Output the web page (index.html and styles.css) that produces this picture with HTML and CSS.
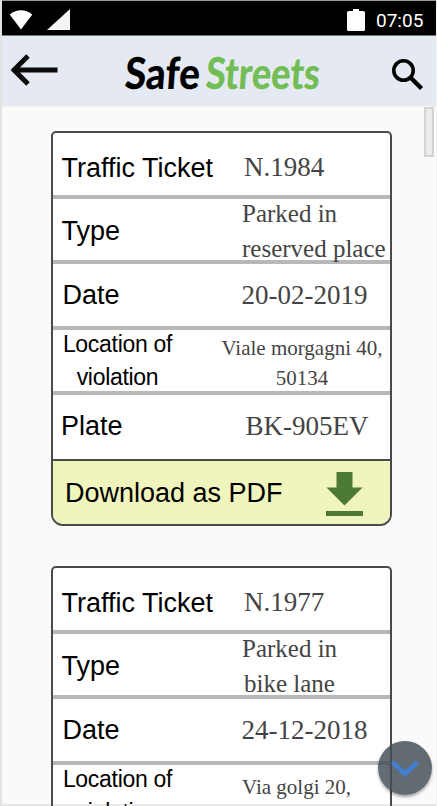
FILE: index.html
```html
<!DOCTYPE html>
<html lang="en">
<head>
<meta charset="utf-8">
<title>SafeStreets</title>
<link rel="stylesheet" href="styles.css">
</head>
<body>
<div class="phone">
  <div class="status">
    <svg class="wifi" width="24" height="20" viewBox="0 0 24 20"><path d="M0.7 4.5Q12 -3.8 23.3 4.5L12 19.6Z" fill="#fff"/></svg>
    <svg class="signal" width="23" height="21" viewBox="0 0 23 21"><path d="M0 21L23 0V21Z" fill="#f5f5f5"/></svg>
    <svg class="battery" width="18" height="22" viewBox="0 0 18 22"><path d="M6 0H12V2H16.5Q18 2 18 3.5V20.5Q18 22 16.500 22H1.5Q0 22 0 20.500V3.500Q0 2 1.500 2H6Z" fill="#fff"/></svg>
    <span class="clock">07:05</span>
  </div>
  <header class="header">
    <svg class="back" width="47" height="32" viewBox="0 0 47 32"><path d="M17 2L3 16L17 30M3 16H46.500" fill="none" stroke="#0b0b0b" stroke-width="5"/></svg>
    <svg class="logo" width="200" height="54" viewBox="0 0 200 54">
      <g transform="translate(3 41) skewX(-4)">
        <text class="safe" x="0" y="0" textLength="75" lengthAdjust="spacingAndGlyphs">Safe</text>
        <text class="streets" x="81" y="0" textLength="114" lengthAdjust="spacingAndGlyphs">Streets</text>
      </g>
    </svg>
    <svg class="search" width="32" height="32" viewBox="0 0 32 32"><circle cx="11.500" cy="11.500" r="9.700" fill="none" stroke="#000" stroke-width="3.600"/><path d="M18.500 18.500L29.500 29.500" stroke="#000" stroke-width="4.400"/></svg>
  </header>
  <main class="content">
    <section class="card">
      <div class="row ticket"><span class="label">Traffic Ticket</span><span class="value">N.1984</span></div>
      <div class="row type"><span class="label">Type</span><span class="value">Parked in<br>reserved place</span></div>
      <div class="row date"><span class="label">Date</span><span class="value">20-02-2019</span></div>
      <div class="row place"><span class="label">Location of<br>violation</span><span class="value">Viale morgagni 40,<br>50134</span></div>
      <div class="row plate"><span class="label">Plate</span><span class="value">BK-905EV</span></div>
      <div class="download"><span>Download as PDF</span>
        <svg width="37" height="44" viewBox="0 0 37 44"><path d="M10.500 0H26.500V15.500H36.500L18.500 33.500L0.500 15.500H10.500ZM0 39H37V44H0Z" fill="#4c7a34"/></svg>
      </div>
    </section>
    <section class="card second">
      <div class="row ticket"><span class="label">Traffic Ticket</span><span class="value">N.1977</span></div>
      <div class="row type"><span class="label">Type</span><span class="value">Parked in<br>bike lane</span></div>
      <div class="row date"><span class="label">Date</span><span class="value">24-12-2018</span></div>
      <div class="row place"><span class="label">Location of<br>violation</span><span class="value">Via golgi 20,</span></div>
    </section>
  </main>
  <div class="scrollbar"></div>
  <div class="fab"><svg width="28" height="17" viewBox="0 0 28 17"><path d="M1.500 2L14 14L26.500 2" fill="none" stroke="#407fd5" stroke-width="4.500"/></svg></div>
</div>
</body>
</html>
```
FILE: styles.css
```css
* { box-sizing: border-box; }
body { margin: 0; background: #fafafa; font-family: "Liberation Sans", sans-serif; overflow: hidden; }
svg { display: block; flex: none; }
.phone {
  position: relative;
  width: 437px;
  height: 806px;
  overflow: hidden;
  background: #fafafa;
  border-left: 2px solid #e2e2e2;
  border-right: 1px solid #f3f3f3;
}
.phone::after {
  content: "";
  position: absolute;
  left: 0;
  right: 0;
  bottom: 0;
  height: 2px;
  background: rgba(120, 120, 120, 0.15);
}
.status {
  display: flex;
  height: 36px;
  border-top: 1px solid #999;
  border-bottom: 1px solid #777;
  background: #000;
}
.wifi { margin: 9px 0 0 7px; }
.signal { margin: 8px 0 0 14px; }
.battery { margin: 8px 0 0 277px; }
.clock { margin: 7px 0 0 11px; color: #fff; font: 19px/26px Roboto, sans-serif; }
.header {
  display: flex;
  height: 71px;
  background: #e5eaf2;
  border-bottom: 1px solid #f2f3ec;
}
.back { margin: 18px 0 0 9px; }
.logo { margin: 12px 0 0 63px; overflow: visible; }
.logo text { font: 900 44px Lato, sans-serif; }
.safe { fill: #000; }
.streets { fill: #72bd55; }
.search { margin: 23px 0 0 71px; }
.content { padding: 24px 0 0 49px; }
.card {
  width: 341px;
  height: 395px;
  border: 2px solid #4a4a4a;
  border-radius: 5px 5px 12px 12px;
  background: #fff;
  overflow: hidden;
}
.second { margin-top: 40px; }
.row {
  display: grid;
  grid-template-columns: 166px 171px;
  height: 66px;
  border-bottom: 4px solid #b8b8b8;
}
.label, .value { height: 62px; white-space: nowrap; }
.label { padding-left: 8.500px; font-size: 27px; line-height: 62px; color: #000; }
.value { font: 27px/62px "Liberation Serif", serif; color: #444; padding-left: 25px; }
.ticket .label { padding-top: 4px; }
.ticket .value { padding-top: 3px; }
.type, .place { height: 65px; }
.type .label { padding-top: 1px; }
.type .value { font-size: 25px; line-height: 35px; margin-top: -3px; padding-left: 23px; }
.second .type .value { padding: 0; margin-left: 23px; width: 95px; text-align: center; }
.date .label { padding-left: 9.500px; }
.date .value { padding-left: 22.500px; }
.place .label { width: 129px; padding-left: 0; text-align: center; font-size: 23px; letter-spacing: -0.300px; line-height: 33px; margin-top: -2px; }
.place .value { font-size: 21px; line-height: 30px; padding: 3px 0 0; margin-left: 1px; width: 164px; text-align: center; }
.second .place .value { padding: 7px 0 0; margin-left: 23px; text-align: left; }
.plate { border-bottom: 2px solid #4a4a4a; }
.plate .label { padding-left: 8px; }
.plate .value { padding-left: 26.500px; }
.download {
  display: flex;
  justify-content: space-between;
  height: 64px;
  padding: 11px 27px 0 12px;
  background: #f0f4bd;
  font-size: 27px;
}
.download span { line-height: 42px; }
.scrollbar {
  position: absolute;
  top: 107px;
  right: 2px;
  width: 10px;
  height: 50px;
  background: #ebebeb;
  border: 2px solid #d3d3d3;
}
.fab {
  position: absolute;
  left: 376px;
  top: 741px;
  display: flex;
  align-items: center;
  justify-content: center;
  width: 54px;
  height: 54px;
  border-radius: 50%;
  background: rgba(67, 78, 86, 0.83);
  box-shadow: 0 2px 3px rgba(0, 0, 0, 0.35);
}
```
